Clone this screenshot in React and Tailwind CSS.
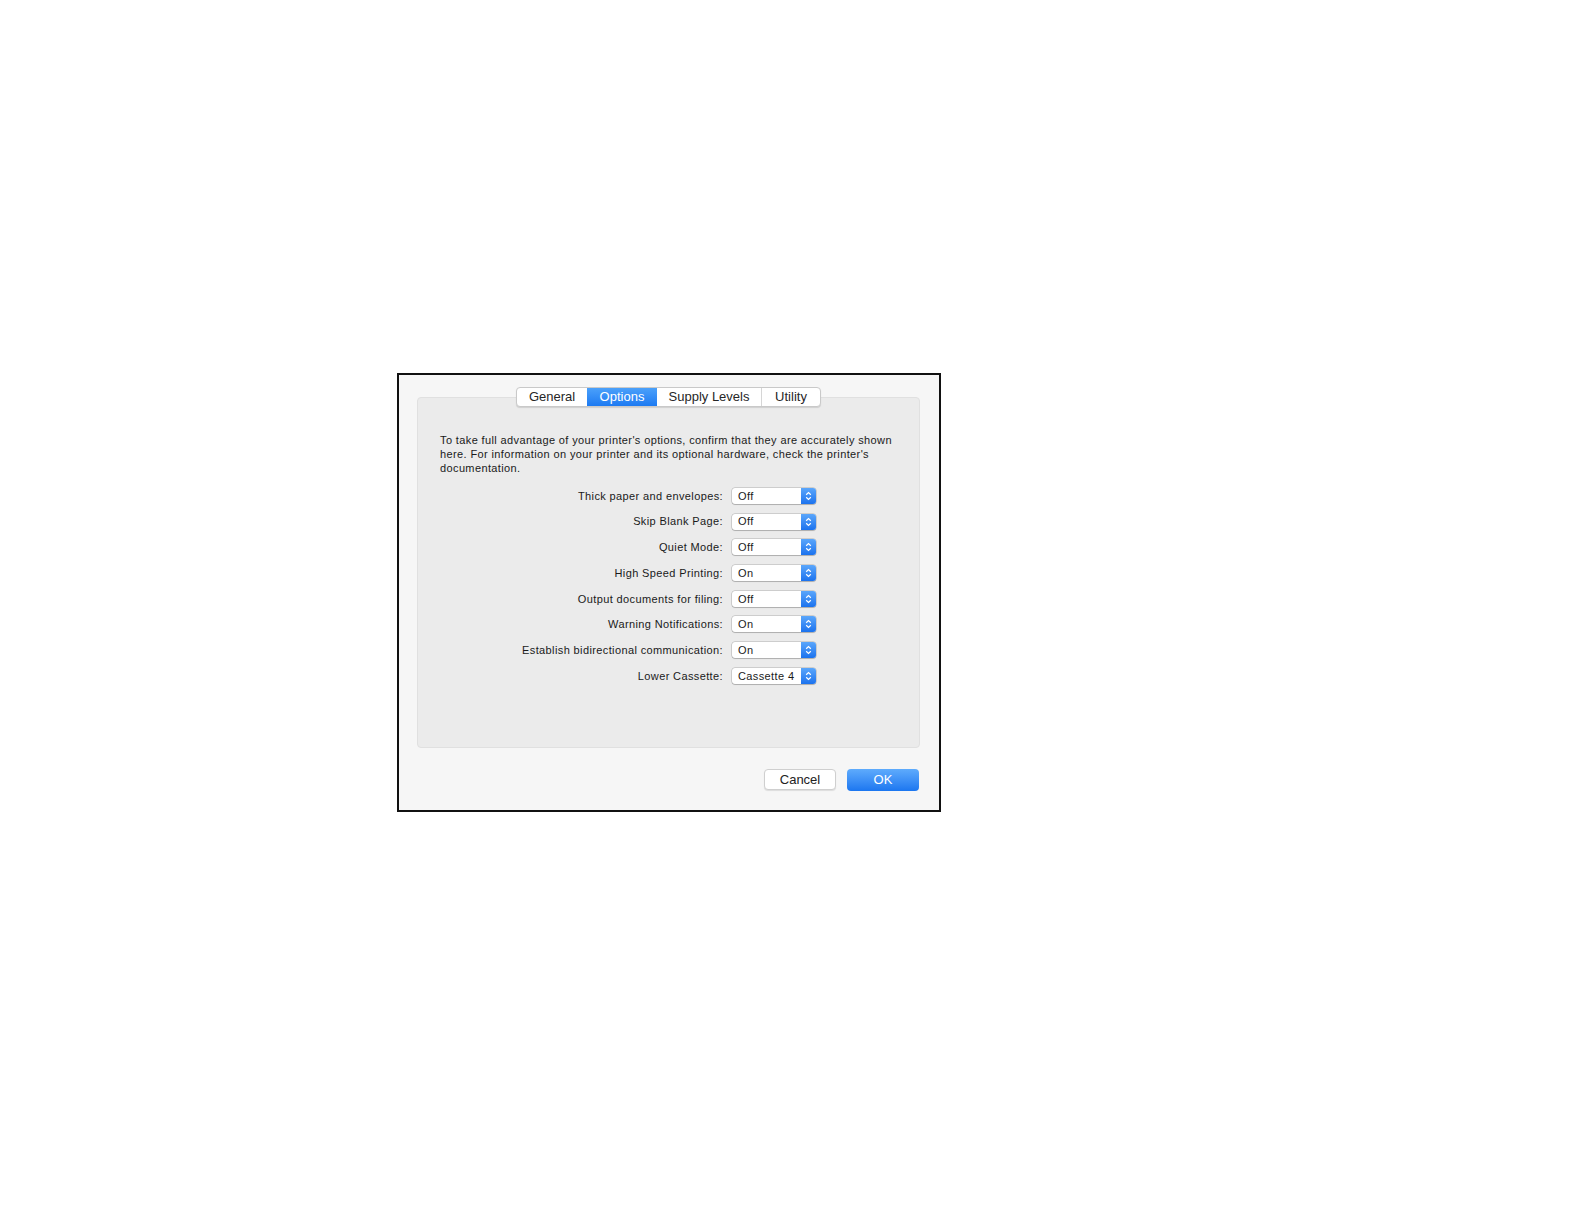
export default function App() {
  const tabs = ["General", "Options", "Supply Levels", "Utility"];
  const tabW = { General: "w-[70px]", Options: "w-[70px]", "Supply Levels": "w-[104px]", Utility: "w-[59px]" };
  const rows = [
    { label: "Thick paper and envelopes:", value: "Off" },
    { label: "Skip Blank Page:", value: "Off" },
    { label: "Quiet Mode:", value: "Off" },
    { label: "High Speed Printing:", value: "On" },
    { label: "Output documents for filing:", value: "Off" },
    { label: "Warning Notifications:", value: "On" },
    { label: "Establish bidirectional communication:", value: "On" },
    { label: "Lower Cassette:", value: "Cassette 4" },
  ];

  return (
    <div
      className="min-h-[1224px] w-full bg-white pt-[373px] pl-[397px]"
      style={{ fontFamily: '"Liberation Sans", Arial, sans-serif' }}
    >
      <div className="w-[544px] h-[439px] border-2 border-[#111] bg-[#f6f6f6] pt-[22px] flex flex-col">
        {/* tab panel */}
        <div className="ml-[18px] w-[503px] h-[351px] rounded-[4px] border border-[#e0e0e0] bg-[#ebebeb] flex flex-col">
          <div className="-mt-[11px] flex justify-center">
            <div className="flex h-[20px] rounded-[4px] border border-[#c9c9c9] bg-white shadow-[0_1px_1px_rgba(0,0,0,0.12)] overflow-hidden">
              {tabs.map((t, i) => (
                <div
                  key={t}
                  className={
                    t === "Options"
                      ? "flex items-center justify-center text-[13px] text-white bg-gradient-to-b from-[#4aa0fa] to-[#1c7af2] " + tabW[t]
                      : "flex items-center justify-center text-[13px] text-[#262626] " +
                        tabW[t] +
                        (i === 3 ? " border-l border-[#d6d6d6]" : "")
                  }
                >
                  {t}
                </div>
              ))}
            </div>
          </div>

          <p className="mt-[26px] pl-[22px] text-[11px] leading-[14px] tracking-[0.38px] text-[#1a1a1a]">
            To take full advantage of your printer's options, confirm that they are accurately shown
            <br />
            here. For information on your printer and its optional hardware, check the printer's
            <br />
            documentation.
          </p>

          <div className="mt-[13px] grid grid-cols-[305px_84px] gap-x-[9px] gap-y-[9.7px]">
            {rows.map((r) => (
              <div key={r.label} className="contents">
                <div className="h-[16px] flex items-center justify-end text-[11px] tracking-[0.38px] text-[#1a1a1a]">
                  {r.label}
                </div>
                <div className="h-[16px] flex rounded-[3px] bg-white shadow-[0_0_0_0.5px_rgba(0,0,0,0.25),0_1px_1px_rgba(0,0,0,0.15)] overflow-hidden">
                  <div className="flex-1 flex items-center pl-[6px] text-[11px] tracking-[0.38px] text-[#1a1a1a]">{r.value}</div>
                  <div className="w-[15px] flex items-center justify-center bg-gradient-to-b from-[#5aa6fb] to-[#1a72ee]">
                    <svg width="7" height="10" viewBox="0 0 7 10" fill="none" stroke="white" strokeWidth="1.2">
                      <path d="M1.2 3.8 L3.5 1.6 L5.8 3.8" />
                      <path d="M1.2 6.2 L3.5 8.4 L5.8 6.2" />
                    </svg>
                  </div>
                </div>
              </div>
            ))}
          </div>
        </div>

        {/* buttons */}
        <div className="mt-[21px] mr-[20px] flex justify-end gap-[11px]">
          <button className="w-[72px] h-[21px] rounded-[4px] bg-white border border-[#cfcfcf] shadow-[0_1px_1px_rgba(0,0,0,0.1)] text-[13px] text-[#222]">
            Cancel
          </button>
          <button className="w-[72px] h-[22px] rounded-[4px] bg-gradient-to-b from-[#5eabfc] to-[#1b76f0] text-[13px] text-white">
            OK
          </button>
        </div>
      </div>
    </div>
  );
}
